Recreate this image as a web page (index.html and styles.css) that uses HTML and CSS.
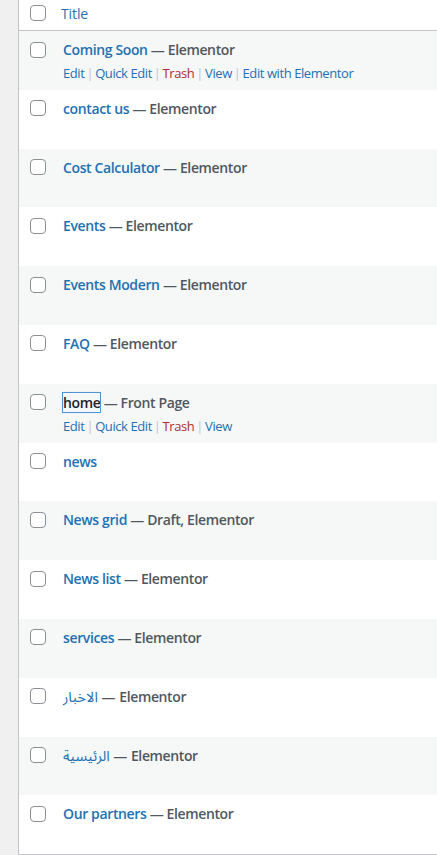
FILE: index.html
```html
<!DOCTYPE html>
<html>
<head>
<meta charset="utf-8">
<link rel="stylesheet" href="styles.css">
</head>
<body>
<div class="page">
  <div class="gutter"></div>
  <div class="table">
    <div class="head">
      <span class="cb"></span>
      <a class="col-title">Title</a>
    </div>
    <div class="row alt">
      <span class="cb"></span>
      <div class="cell">
        <div class="title"><a class="rt">Coming Soon</a><span class="state"> — Elementor</span></div>
        <div class="actions"><a>Edit</a><i>|</i><a>Quick Edit</a><i>|</i><a class="trash">Trash</a><i>|</i><a>View</a><i>|</i><a>Edit with Elementor</a></div>
      </div>
    </div>
    <div class="row">
      <span class="cb"></span>
      <div class="cell"><div class="title"><a class="rt">contact us</a><span class="state"> — Elementor</span></div></div>
    </div>
    <div class="row alt">
      <span class="cb"></span>
      <div class="cell"><div class="title"><a class="rt">Cost Calculator</a><span class="state"> — Elementor</span></div></div>
    </div>
    <div class="row">
      <span class="cb"></span>
      <div class="cell"><div class="title"><a class="rt">Events</a><span class="state"> — Elementor</span></div></div>
    </div>
    <div class="row alt">
      <span class="cb"></span>
      <div class="cell"><div class="title"><a class="rt">Events Modern</a><span class="state"> — Elementor</span></div></div>
    </div>
    <div class="row">
      <span class="cb"></span>
      <div class="cell"><div class="title"><a class="rt">FAQ</a><span class="state"> — Elementor</span></div></div>
    </div>
    <div class="row alt">
      <span class="cb"></span>
      <div class="cell">
        <div class="title"><a class="rt focus">home</a><span class="state"> — Front Page</span></div>
        <div class="actions"><a>Edit</a><i>|</i><a>Quick Edit</a><i>|</i><a class="trash">Trash</a><i>|</i><a>View</a></div>
      </div>
    </div>
    <div class="row">
      <span class="cb"></span>
      <div class="cell"><div class="title"><a class="rt">news</a></div></div>
    </div>
    <div class="row alt">
      <span class="cb"></span>
      <div class="cell"><div class="title"><a class="rt">News grid</a><span class="state"> — Draft, Elementor</span></div></div>
    </div>
    <div class="row">
      <span class="cb"></span>
      <div class="cell"><div class="title"><a class="rt">News list</a><span class="state"> — Elementor</span></div></div>
    </div>
    <div class="row alt">
      <span class="cb"></span>
      <div class="cell"><div class="title"><a class="rt">services</a><span class="state"> — Elementor</span></div></div>
    </div>
    <div class="row">
      <span class="cb"></span>
      <div class="cell"><div class="title"><a class="rt ar" dir="rtl">الاخبار</a><span class="state"> — Elementor</span></div></div>
    </div>
    <div class="row alt">
      <span class="cb"></span>
      <div class="cell"><div class="title"><a class="rt ar" dir="rtl">الرئيسية</a><span class="state"> — Elementor</span></div></div>
    </div>
    <div class="row">
      <span class="cb"></span>
      <div class="cell"><div class="title"><a class="rt">Our partners</a><span class="state"> — Elementor</span></div></div>
    </div>
  </div>
</div>
</body>
</html>
```

FILE: styles.css
```css
html, body {
  margin: 0;
  padding: 0;
  background: #f0f0f1;
}
body {
  font-family: "Open Sans", "Noto Sans", "DejaVu Sans", sans-serif;
  color: #50575e;
  font-size: 13px;
}
.page {
  display: flex;
  width: 437px;
  height: 855px;
  overflow: hidden;
}
.gutter {
  width: 18px;
  flex: none;
  background: #f0f0f1;
}
.table {
  flex: 1;
  background: #fff;
  border-left: 1px solid #c3c4c7;
  border-bottom: 1px solid #c3c4c7;
  align-self: flex-start;
}
.cb {
  display: block;
  box-sizing: border-box;
  width: 16px;
  height: 16px;
  border: 1px solid #8c8f94;
  border-radius: 4px;
  background: #fff;
  flex: none;
}
.head {
  height: 30px;
  border-bottom: 1px solid #c3c4c7;
  display: flex;
  align-items: center;
  padding-left: 11px;
  box-sizing: content-box;
}
.head .cb { margin-top: -4px; }
.col-title {
  margin-left: 15px;
  margin-top: -4px;
  color: #2271b1;
  font-size: 14px;
  letter-spacing: -0.1px;
}
.row {
  height: 58.8px;
  display: flex;
  align-items: flex-start;
  padding-left: 11px;
}
.row .cb { margin-top: 10.5px; }
.row.alt { background: #f6f7f7; }
.cell {
  margin-left: 17px;
  padding-top: 8px;
}
.title {
  font-size: 14px;
  font-weight: 600;
  line-height: 21px;
  white-space: nowrap;
  letter-spacing: -0.37px;
}
.rt {
  color: #2271b1;
}
.rt.ar {
  font-family: "Noto Sans Arabic", "DejaVu Sans", sans-serif;
  font-weight: 400;
  font-size: 14.5px;
  letter-spacing: 0;
}
.rt.focus {
  color: #1d2327;
  outline: 1px solid #4f94d4;
  outline-offset: 0;
  box-shadow: 0 0 2px rgba(79,148,212,.6);
}
.state { color: #50575e; }
.actions {
  font-size: 13px;
  line-height: 19px;
  margin-top: 4px;
  white-space: nowrap;
  letter-spacing: -0.42px;
}
.actions a { color: #2271b1; }
.actions a.trash { color: #b32d2e; }
.actions i {
  font-style: normal;
  color: #c3c4c7;
  padding: 0 2px;
}
```
